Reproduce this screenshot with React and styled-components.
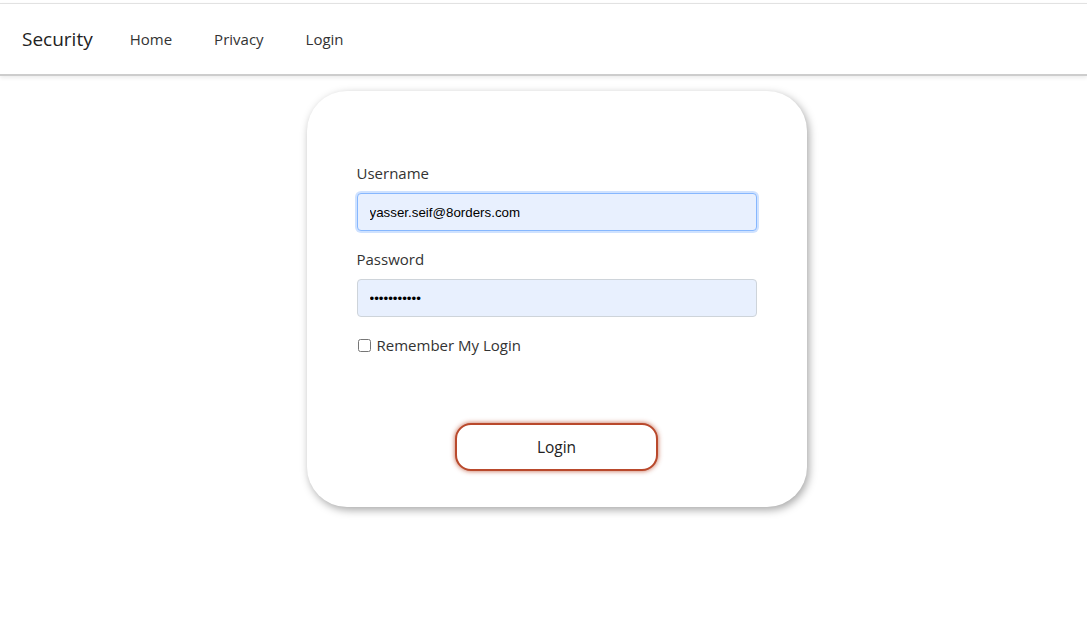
import React, { useState } from 'react';
import styled, { createGlobalStyle } from 'styled-components';

const GlobalStyle = createGlobalStyle`
  body, html {
    margin: 0;
    padding: 0;
    background: #fff;
    font-family: "Open Sans", "Noto Sans", sans-serif;
    color: #212529;
  }
  * {
    box-sizing: border-box;
  }
`;

const Page = styled.div`
  min-height: 100vh;
  padding-top: 3px;
`;

const Navbar = styled.nav`
  display: flex;
  align-items: center;
  height: 73px;
  padding: 0 22px;
  border-top: 1px solid #e2e2e2;
  border-bottom: 2px solid #cdcdcd;
  box-shadow: 0 2px 4px rgba(0, 0, 0, 0.08);
  background: #fff;
`;

const Brand = styled.a`
  font-size: 19px;
  color: #222;
  text-decoration: none;
  margin-right: 16px;
`;

const NavLink = styled.a`
  font-size: 15px;
  color: #333;
  text-decoration: none;
  padding: 0 21px;
`;

const Main = styled.main`
  display: flex;
  justify-content: center;
  padding-top: 15px;
  padding-left: 26px;
`;

const Card = styled.div`
  width: 500px;
  padding: 70px 50px 36px;
  border-radius: 40px;
  background: #fff;
  box-shadow: 2px 3px 8px rgba(0, 0, 0, 0.35);
`;

const Group = styled.div`
  margin-bottom: 16px;
`;

const Label = styled.label`
  display: block;
  font-size: 15px;
  line-height: 24px;
  margin-bottom: 8px;
  color: #333;
`;

const Input = styled.input`
  display: block;
  width: 100%;
  height: 38px;
  padding: 0 12px;
  font-family: "Liberation Sans", Arial, sans-serif;
  font-size: 13.33px;
  color: #000;
  background: #e8f0fe;
  border: 1px solid ${p => (p.$focused ? '#86b7fe' : '#ced4da')};
  border-radius: 4px;
  outline: none;
  box-shadow: ${p => (p.$focused ? '0 0 0 2px rgba(13, 110, 253, 0.2)' : 'none')};
`;

const CheckRow = styled.label`
  display: flex;
  align-items: center;
  gap: 6px;
  font-size: 15px;
  line-height: 24px;
  color: #333;
`;

const Check = styled.input`
  margin: 0 0 0 1px;
  width: 13px;
  height: 13px;
`;

const ButtonRow = styled.div`
  display: flex;
  justify-content: center;
  margin-top: 66px;
`;

const LoginButton = styled.button`
  width: 203px;
  height: 48px;
  font-family: inherit;
  font-size: 15.5px;
  color: #222;
  background: #fff;
  border: 2px solid #b9492c;
  border-radius: 16px;
  box-shadow: 0 0 5px rgba(185, 73, 44, 0.85);
  cursor: pointer;
`;

const App = () => {
  const [username, setUsername] = useState('yasser.seif@8orders.com');
  const [password, setPassword] = useState('password123');
  const [remember, setRemember] = useState(false);

  return (
    <>
      <GlobalStyle />
      <Page>
        <Navbar>
          <Brand href="#">Security</Brand>
          <NavLink href="#">Home</NavLink>
          <NavLink href="#">Privacy</NavLink>
          <NavLink href="#">Login</NavLink>
        </Navbar>
        <Main>
          <Card>
            <Group>
              <Label htmlFor="username">Username</Label>
              <Input
                id="username"
                type="text"
                $focused
                value={username}
                onChange={e => setUsername(e.target.value)}
              />
            </Group>
            <Group>
              <Label htmlFor="password">Password</Label>
              <Input
                id="password"
                type="password"
                value={password}
                onChange={e => setPassword(e.target.value)}
              />
            </Group>
            <CheckRow>
              <Check
                type="checkbox"
                checked={remember}
                onChange={e => setRemember(e.target.checked)}
              />
              Remember My Login
            </CheckRow>
            <ButtonRow>
              <LoginButton type="button">Login</LoginButton>
            </ButtonRow>
          </Card>
        </Main>
      </Page>
    </>
  );
};

export default App;
